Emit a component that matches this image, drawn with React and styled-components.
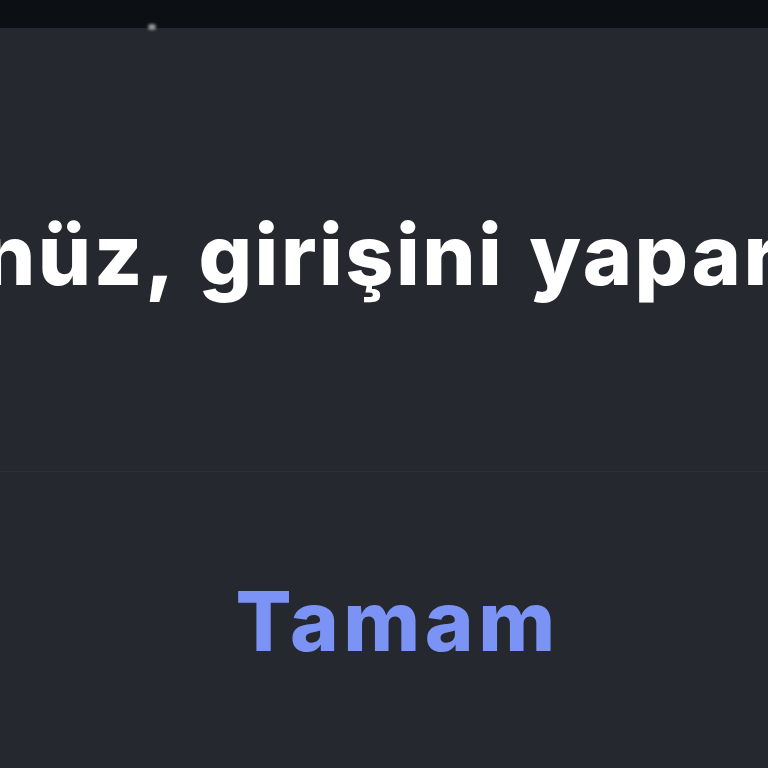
import React from 'react'
import styled, { createGlobalStyle } from 'styled-components'

const Global = createGlobalStyle`
    html, body {
        margin: 0;
        padding: 0;
        background: #25282e;
    }
    #root {
        height: 768px;
    }
`

function App() {
    return (
        <Page>
            <Global />
            <StatusBar>
                <Glint />
            </StatusBar>
            <Message>
                <MessageText>nüz, girişini yapar</MessageText>
            </Message>
            <Actions>
                <ActionButton>Tamam</ActionButton>
            </Actions>
        </Page>
    )
}

const Page = styled.div`
    width: 768px;
    height: 768px;
    overflow: hidden;
    display: flex;
    flex-direction: column;
    background-color: #25282e;
    font-family: Inter, "Liberation Sans", sans-serif;
`

const StatusBar = styled.div`
    height: 28px;
    flex-shrink: 0;
    background-color: #0c0f14;
    display: flex;
    align-items: flex-end;
    padding-left: 148px;
`

const Glint = styled.div`
    width: 8px;
    height: 6px;
    border-radius: 50%;
    background: #9a9ca0;
    filter: blur(1.5px);
    margin-bottom: -2px;
`

const Message = styled.div`
    height: 443px;
    flex-shrink: 0;
    border-bottom: 1px solid #2c2f35;
    display: flex;
    align-items: center;
    overflow: hidden;
`

const MessageText = styled.div`
    margin-left: -18px;
    margin-top: 10px;
    white-space: nowrap;
    color: #ffffff;
    font-size: 84px;
    font-weight: 800;
    letter-spacing: 2.5px;
    word-spacing: 4px;
`

const Actions = styled.div`
    flex: 1;
    display: flex;
    justify-content: center;
    padding-top: 108px;
`

const ActionButton = styled.button`
    align-self: flex-start;
    background: none;
    border: none;
    padding: 0;
    cursor: pointer;
    color: #7b93f5;
    font-family: inherit;
    font-size: 83px;
    font-weight: 800;
    line-height: 1;
    letter-spacing: 4.5px;
    margin-left: 27px;
`

export default App
